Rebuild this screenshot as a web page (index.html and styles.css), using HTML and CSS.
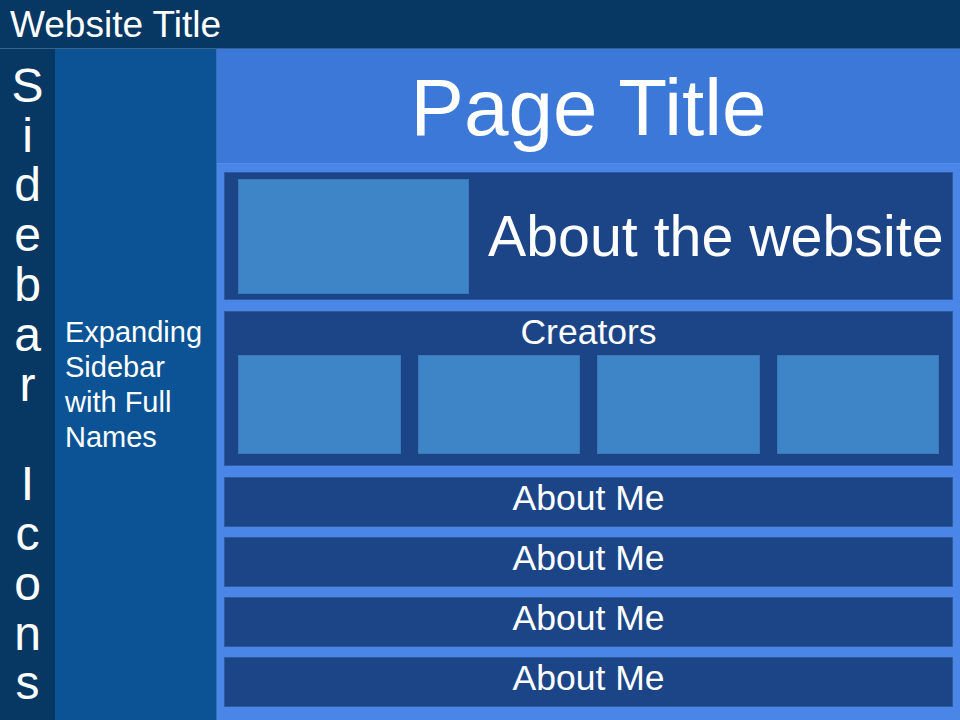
FILE: index.html
```html
<!DOCTYPE html>
<html lang="en">
<head>
  <meta charset="UTF-8">
  <meta name="viewport" content="width=device-width, initial-scale=1.0">
  <title>Website Title</title>
  <link rel="stylesheet" href="styles.css">
</head>
<body>
  <!-- Top Bar -->
  <header class="site-header">Website Title</header>

  <div class="layout">
    <!-- Icon Sidebar -->
    <nav class="icon-bar">S<br>i<br>d<br>e<br>b<br>a<br>r<br><br>I<br>c<br>o<br>n<br>s</nav>

    <!-- Expanding Sidebar -->
    <aside class="expand-bar">
      <p class="expand-text">Expanding<br>Sidebar<br>with Full<br>Names</p>
    </aside>

    <!-- Main Content -->
    <main class="main">
      <h1 class="page-title">Page Title</h1>

      <div class="content">
        <section class="card about">
          <div class="picture about-picture"></div>
          <h2 class="about-text">About the website</h2>
        </section>

        <section class="card creators">
          <h3 class="creators-title">Creators</h3>
          <div class="creator-grid">
            <div class="picture"></div>
            <div class="picture"></div>
            <div class="picture"></div>
            <div class="picture"></div>
          </div>
        </section>

        <div class="card about-me">About Me</div>
        <div class="card about-me">About Me</div>
        <div class="card about-me">About Me</div>
        <div class="card about-me">About Me</div>
      </div>
    </main>
  </div>
</body>
</html>
```

FILE: styles.css
```css
/* General Styles */
* {
  box-sizing: border-box;
}

body {
  margin: 0;
  width: 960px;
  height: 720px;
  overflow: hidden;
  font-family: "Liberation Sans", Arial, sans-serif;
  color: #fff;
  background: #4a86e8;
}

h1, h2, h3, p {
  margin: 0;
  font-weight: normal;
}

/* Top Bar */
.site-header {
  height: 49px;
  padding: 2px 0 0 10px;
  background-color: #073763;
  border-bottom: 1px solid #35648f;
  font-size: 37px;
  line-height: 46px;
}

.layout {
  display: flex;
  height: 671px;
}

/* Sidebars */
.icon-bar {
  width: 55px;
  flex-shrink: 0;
  background-color: #073763;
  display: flex;
  flex-direction: column;
  justify-content: center;
  text-align: center;
  font-size: 48px;
  line-height: 49.8px;
}

.expand-bar {
  width: 162px;
  flex-shrink: 0;
  padding-left: 10px;
  background-color: #0b5394;
  border-right: 1px solid #3a6fb8;
  display: flex;
  align-items: center;
}

.expand-text {
  font-size: 29px;
  line-height: 35px;
}

/* Main Area */
.main {
  flex: 1;
  min-width: 0;
  display: flex;
  flex-direction: column;
}

.page-title {
  height: 115px;
  padding-top: 4px;
  background-color: #3c78d8;
  border-bottom: 1px solid #4f8cee;
  display: flex;
  align-items: center;
  justify-content: center;
  font-size: 80px;
}

.content {
  padding: 8px 7px 13px;
  display: flex;
  flex-direction: column;
  gap: 10px;
}

.card {
  background-color: #1c4587;
  border: 1px solid #2c5b9e;
}

.picture {
  background-color: #3d85c6;
  border: 1px solid #3a78b8;
}

/* About Card */
.about {
  height: 128px;
  margin-bottom: 1px;
  padding: 0 13px;
  display: flex;
  align-items: center;
}

.about-picture {
  width: 231px;
  height: 115px;
  flex-shrink: 0;
}

.about-text {
  margin-left: 19px;
  font-size: 57.3px;
  white-space: nowrap;
}

/* Creators Card */
.creators {
  height: 155px;
  margin-bottom: 1px;
  padding: 0 13px 11px;
}

.creators-title {
  text-align: center;
  font-size: 35.5px;
  line-height: 40px;
  margin-bottom: 3px;
}

.creator-grid {
  display: grid;
  grid-template-columns: repeat(4, 1fr);
  gap: 17px;
}

.creator-grid .picture {
  height: 99px;
}

/* About Me Rows */
.about-me {
  height: 50px;
  text-align: center;
  font-size: 35.5px;
  line-height: 40px;
}
```
